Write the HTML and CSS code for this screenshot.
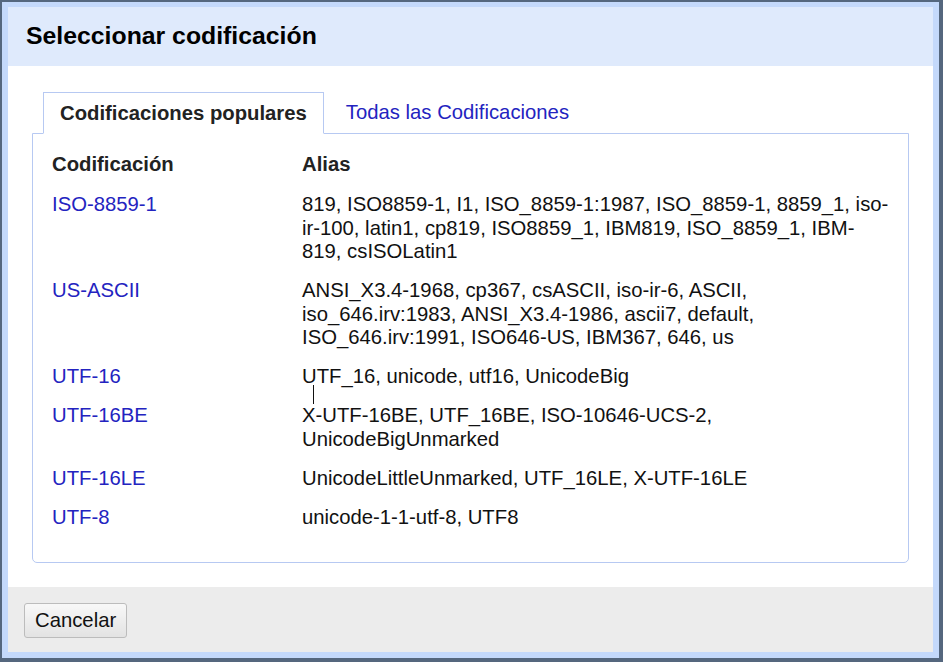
FILE: index.html
```html
<!DOCTYPE html>
<html lang="es">
<head>
<meta charset="utf-8">
<title>Seleccionar codificación</title>
<link rel="stylesheet" href="styles.css">
</head>
<body>
<div class="frame">
  <div class="dialog">
    <div class="dialog-header">
      <h1 class="dialog-title">Seleccionar codificación</h1>
    </div>
    <div class="dialog-body">
      <div class="tabs">
        <div class="tab tab-active">Codificaciones populares</div>
        <div class="tab tab-link">Todas las Codificaciones</div>
      </div>
      <div class="tab-panel">
        <table class="enc-table">
          <thead>
            <tr><th class="col-enc">Codificación</th><th class="col-alias">Alias</th></tr>
          </thead>
          <tbody>
            <tr><td class="enc">ISO-8859-1</td><td class="alias">819, ISO8859-1, I1, ISO_8859-1:1987, ISO_8859-1, 8859_1, iso-<wbr>ir-100, latin1, cp819, ISO8859_1, IBM819, ISO_8859_1, IBM-<wbr>819, csISOLatin1</td></tr>
            <tr><td class="enc">US-ASCII</td><td class="alias">ANSI_X3.4-1968, cp367, csASCII, iso-ir-6, ASCII, iso_646.irv:1983, ANSI_X3.4-1986, ascii7, default, ISO_646.irv:1991, ISO646-US, IBM367, 646, us</td></tr>
            <tr><td class="enc">UTF-16</td><td class="alias">UTF_16, unicode, utf16, UnicodeBig</td></tr>
            <tr><td class="enc">UTF-16BE</td><td class="alias">X-UTF-16BE, UTF_16BE, ISO-10646-UCS-2, UnicodeBigUnmarked</td></tr>
            <tr><td class="enc">UTF-16LE</td><td class="alias">UnicodeLittleUnmarked, UTF_16LE, X-UTF-16LE</td></tr>
            <tr><td class="enc">UTF-8</td><td class="alias">unicode-1-1-utf-8, UTF8</td></tr>
          </tbody>
        </table>
      </div>
    </div>
    <div class="dialog-footer">
      <button class="btn" type="button">Cancelar</button>
    </div>
  </div>
  <div class="ibeam"></div>
</div>
</body>
</html>
```

FILE: styles.css
```css
* { box-sizing: border-box; }
html, body {
  margin: 0;
  padding: 0;
  background: #4f6178;
}
body {
  font-family: "Liberation Sans", Arial, sans-serif;
  color: #111;
}
.frame {
  position: relative;
  width: 943px;
  height: 662px;
  border-style: solid;
  border-color: #55677e;
  border-width: 2px 4px 4px 2px;
  background: #c4d9fb;
  padding: 5px 6px 6px 6px;
  display: flex;
}
.dialog {
  flex: 1;
  display: flex;
  flex-direction: column;
  background: #fff;
}
.dialog-header {
  height: 59px;
  background: #dfeafc;
  display: flex;
  align-items: center;
  padding-left: 18px;
}
.dialog-title {
  margin: 0;
  font-size: 24.8px;
  font-weight: bold;
  color: #000;
  padding-bottom: 1px;
}
.dialog-body {
  flex: 1;
  padding: 26px 24px 24px 24px;
  display: flex;
  flex-direction: column;
}
.tabs {
  display: flex;
  padding-left: 11px;
  height: 42px;
  position: relative;
  z-index: 1;
}
.tab {
  font-size: 20.3px;
  line-height: 40px;
}
.tab-active {
  font-weight: bold;
  color: #222;
  background: #fff;
  border: 1px solid #b7c9f2;
  border-bottom: 1px solid #fff;
  padding: 0 16px 0 16px;
}
.tab-link {
  color: #2323c0;
  padding-left: 22px;
}
.tab-panel {
  flex: 1;
  margin-top: -1px;
  border: 1px solid #b7c9f2;
  border-radius: 0 0 5px 5px;
  padding: 14px 16px 0 19px;
}
.enc-table {
  border-collapse: collapse;
  width: 100%;
  font-size: 20.3px;
}
.enc-table th {
  text-align: left;
  font-weight: bold;
  color: #222;
  padding: 5px 0 8.5px 0;
  line-height: 23.5px;
}
.col-enc { width: 250px; }
.enc-table td {
  vertical-align: top;
  padding: 8px 0 7.6px 0;
  line-height: 23.5px;
}
.enc { color: #2323c0; }
.alias { color: #111; padding-right: 0; }
.dialog-footer {
  height: 65px;
  background: #ececec;
  display: flex;
  align-items: center;
  padding-left: 16px;
}
.btn {
  font-family: "Liberation Sans", Arial, sans-serif;
  font-size: 20.3px;
  color: #111;
  height: 35px;
  padding: 0 10px;
  border: 1px solid #bcbcbc;
  border-radius: 3px;
  background: linear-gradient(#f8f8f8, #e3e3e3);
  margin-top: 1px;
}
.ibeam {
  position: absolute;
  left: 311px;
  top: 383px;
  width: 1px;
  height: 19px;
  background: #111;
}
```
